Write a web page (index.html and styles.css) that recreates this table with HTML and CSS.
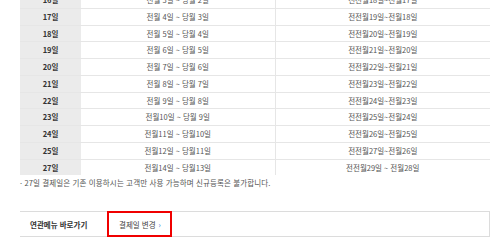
FILE: index.html
```html
<!DOCTYPE html>
<html lang="ko">
<head>
<meta charset="utf-8">
<title>결제일 안내</title>
<link rel="stylesheet" href="styles.css">
</head>
<body>
<div class="page">
  <table class="pay-table">
    <colgroup>
      <col class="c-day">
      <col class="c-range">
      <col class="c-range2">
    </colgroup>
    <tbody>
      <tr><th>16일</th><td>전월 3일 ~ 당월 2일</td><td>전전월18일~전월17일</td></tr>
      <tr><th>17일</th><td>전월 4일 ~ 당월 3일</td><td>전전월19일~전월18일</td></tr>
      <tr><th>18일</th><td>전월 5일 ~ 당월 4일</td><td>전전월20일~전월19일</td></tr>
      <tr><th>19일</th><td>전월 6일 ~ 당월 5일</td><td>전전월21일~전월20일</td></tr>
      <tr><th>20일</th><td>전월 7일 ~ 당월 6일</td><td>전전월22일~전월21일</td></tr>
      <tr><th>21일</th><td>전월 8일 ~ 당월 7일</td><td>전전월23일~전월22일</td></tr>
      <tr><th>22일</th><td>전월 9일 ~ 당월 8일</td><td>전전월24일~전월23일</td></tr>
      <tr><th>23일</th><td>전월10일 ~ 당월 9일</td><td>전전월25일~전월24일</td></tr>
      <tr><th>24일</th><td>전월11일 ~ 당월10일</td><td>전전월26일~전월25일</td></tr>
      <tr><th>25일</th><td>전월12일 ~ 당월11일</td><td>전전월27일~전월26일</td></tr>
      <tr class="last"><th>27일</th><td>전월14일 ~ 당월13일</td><td>전전월29일 ~ 전월28일</td></tr>
    </tbody>
  </table>
  <p class="note">· 27일 결제일은 기존 이용하시는 고객만 사용 가능하며 신규등록은 불가합니다.</p>

  <div class="related">
    <div class="related-title">연관메뉴 바로가기</div>
    <a class="related-link" href="#">결제일 변경 <span class="arrow">›</span></a>
  </div>
</div>
</body>
</html>
```

FILE: styles.css
```css
html, body {
  margin: 0;
  padding: 0;
  background: #fff;
}
body {
  font-family: "Noto Sans CJK KR", "Noto Sans", sans-serif;
  font-size: 7.5px;
  color: #444;
}
.page {
  width: 470px;
  margin: -8px 0 0 20px;
}
.pay-table {
  width: 470px;
  border-collapse: collapse;
  table-layout: fixed;
}
.c-day { width: 61px; }
.c-range { width: 194px; }
.c-range2 { width: 215px; }
.pay-table th,
.pay-table td {
  height: 15.75px;
  padding: 0;
  line-height: 15.75px;
  text-align: center;
  border-bottom: 1px solid #e6e6e6;
  white-space: nowrap;
}
.pay-table th {
  background: #ebebeb;
  font-weight: bold;
  color: #333;
}
.pay-table td {
  color: #555;
}
.pay-table td + td {
  border-left: 1px solid #e6e6e6;
}
.pay-table tr.last th,
.pay-table tr.last td {
  border-bottom: 0;
}
.note {
  margin: 3px 0 0 0;
  line-height: 10px;
  color: #555;
  letter-spacing: 0.12px;
}
.related {
  margin-top: 23px;
  display: flex;
  align-items: stretch;
  height: 24px;
  border: 1px solid #dcdcdc;
  border-left: 0;
}
.related-title {
  width: 77px;
  padding-left: 10px;
  display: flex;
  align-items: center;
  font-weight: bold;
  color: #333;
}
.related-link {
  margin: -1px 0;
  width: 51px;
  padding-left: 10px;
  border: 2px solid #f00000;
  display: flex;
  align-items: center;
  color: #444;
  text-decoration: none;
}
.arrow {
  color: #3a7bd5;
  margin-left: 3px;
}
```
